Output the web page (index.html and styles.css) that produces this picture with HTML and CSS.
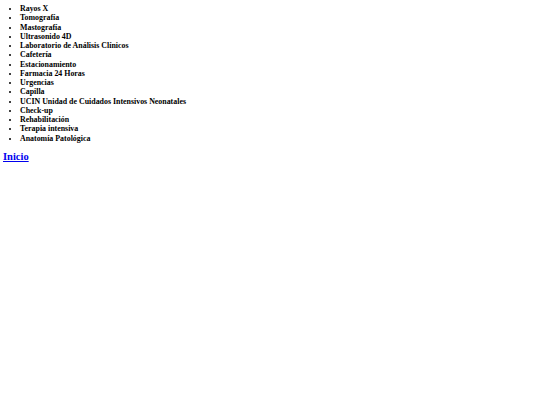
FILE: index.html
```html
<!DOCTYPE html>
<html>
<head>
<meta charset="utf-8">
<link rel="stylesheet" href="styles.css">
</head>
<body>
<ul class="services">
<li>Rayos X</li>
<li>Tomografía</li>
<li>Mastografía</li>
<li>Ultrasonido 4D</li>
<li>Laboratorio de Análisis Clínicos</li>
<li>Cafetería</li>
<li>Estacionamiento</li>
<li>Farmacia 24 Horas</li>
<li>Urgencias</li>
<li>Capilla</li>
<li>UCIN Unidad de Cuidados Intensivos Neonatales</li>
<li>Check-up</li>
<li>Rehabilitación</li>
<li>Terapia intensiva</li>
<li>Anatomía Patológica</li>
</ul>
<p class="home"><a href="#">Inicio</a></p>
</body>
</html>
```
FILE: styles.css
```css
body {
  margin: 4px 3px;
  font-family: "Liberation Serif", serif;
  font-size: 7.9px;
  line-height: 9.25px;
  color: #000;
}
.services {
  margin: 0;
  padding-left: 17px;
  font-weight: bold;
}
.home {
  margin: 8px 0 0;
  font-size: 10.5px;
  line-height: 12px;
  font-weight: bold;
}
.home a {
  color: #0000ee;
}
```
